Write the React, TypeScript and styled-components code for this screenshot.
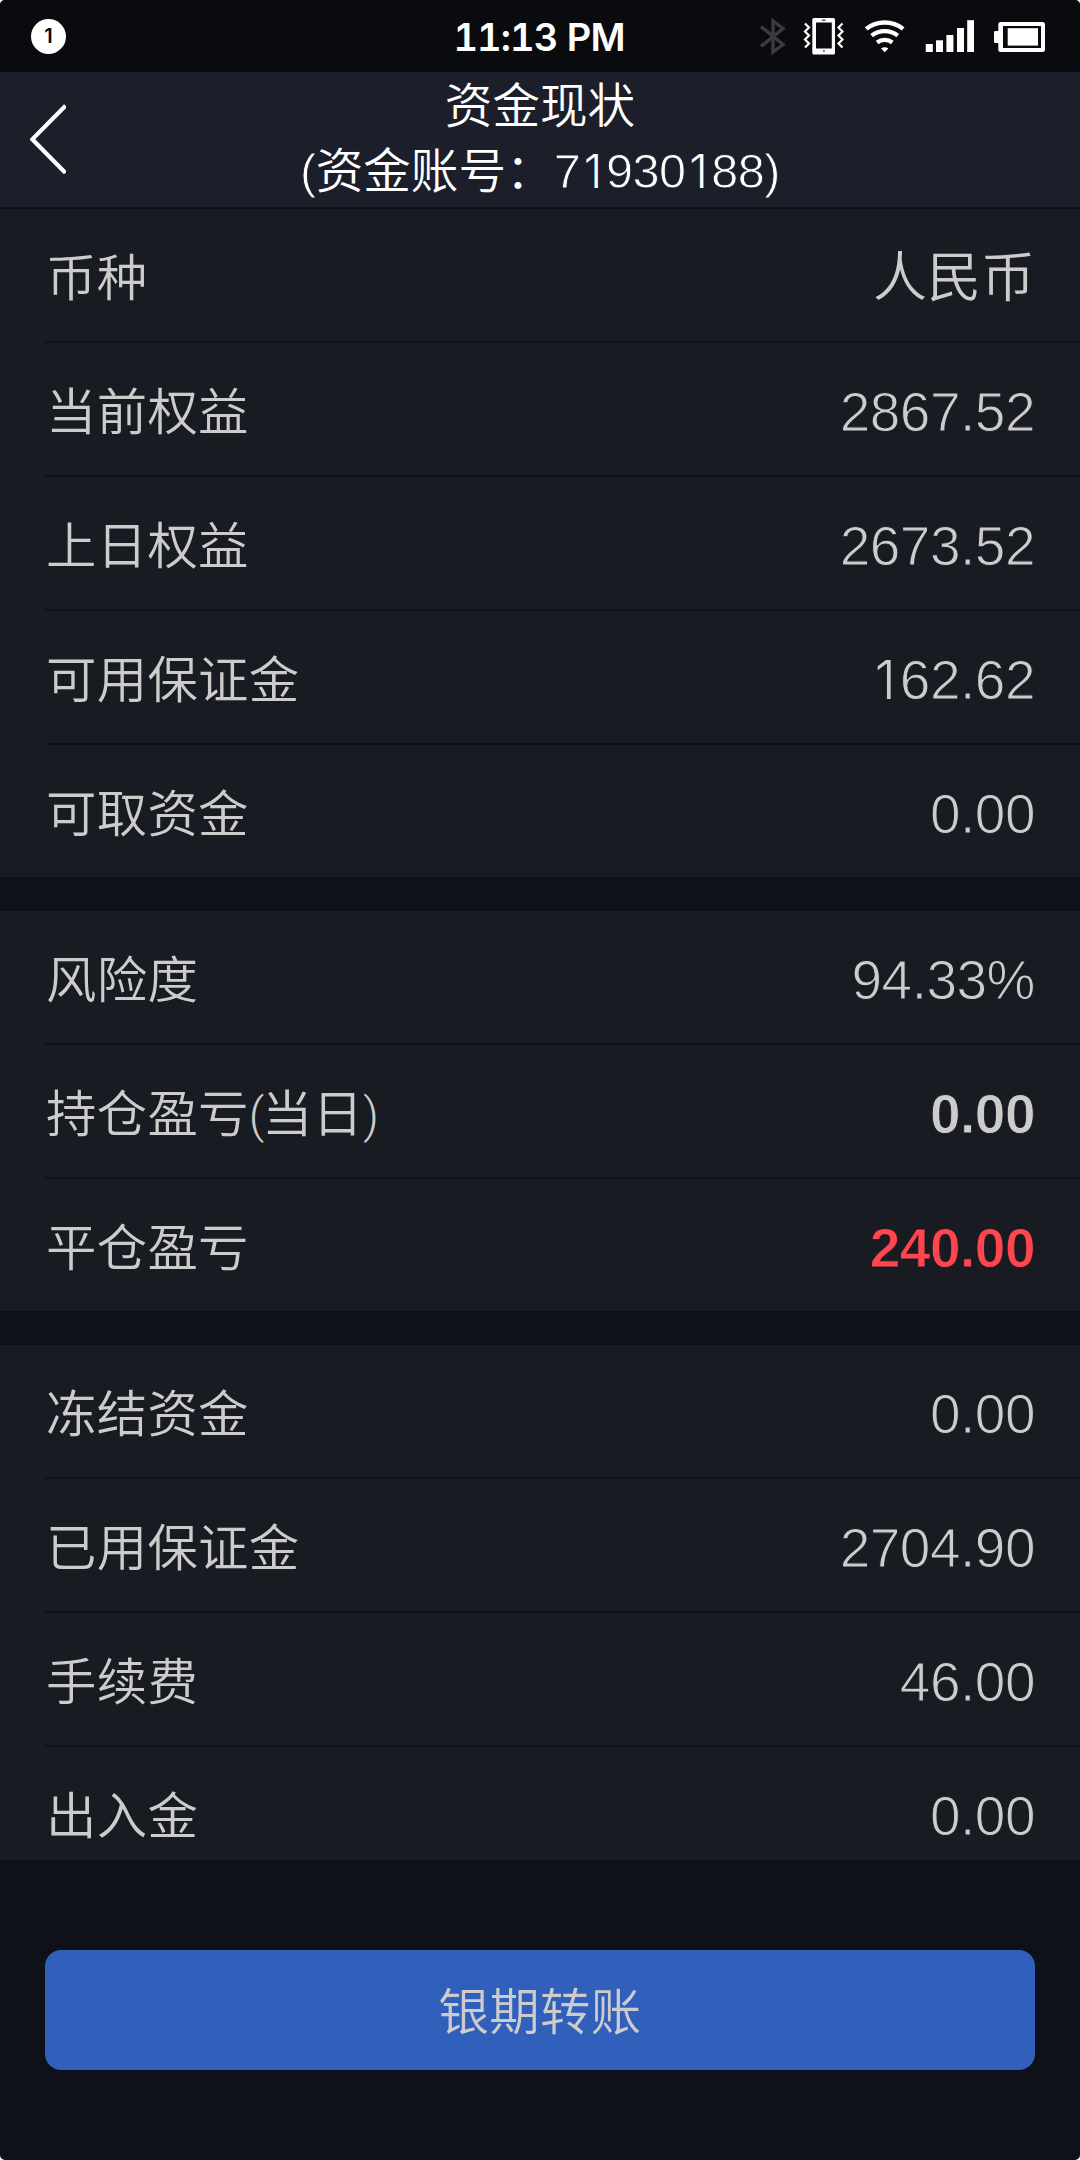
import React from 'react';
import styled, { createGlobalStyle } from 'styled-components';

const color = {
  page: '#0e1118',
  status: '#0a0b0e',
  header: '#1c1f29',
  row: '#191b23',
  text: '#cccccc',
  rise: '#ff454d',
  button: '#3060bc',
};

const cjk = '"Noto Sans CJK SC", sans-serif';

const Global = createGlobalStyle`
  * { box-sizing: border-box; }
  body { margin: 0; background: #fff; }
`;

const Screen = styled.div`
  width: 1080px;
  height: 2160px;
  display: flex;
  flex-direction: column;
  overflow: hidden;
  border-radius: 5px;
  background: ${color.page};
  color: ${color.text};
  font-family: ${cjk};
  font-weight: 350;
`;

const StatusBar = styled.div`
  flex: none;
  height: 72px;
  padding: 0 34px 0 31px;
  display: grid;
  grid-template-columns: 1fr auto 1fr;
  align-items: center;
  background: ${color.status};
  color: #fff;
`;

const Badge = styled.span`
  width: 35px;
  height: 35px;
  margin-bottom: 1px;
  border-radius: 50%;
  display: flex;
  align-items: center;
  justify-content: center;
  background: #fff;
  color: ${color.status};
  font: 600 20px/35px Inter, sans-serif;
`;

const Time = styled.span`
  font: 600 38px/72px Inter, sans-serif;
  font-feature-settings: 'tnum';
  letter-spacing: -0.9px;
  padding-top: 1px;
  margin-left: 1px;
`;

const Icons = styled.div`
  display: flex;
  justify-content: flex-end;
`;

const Icon = styled.svg<{ $gap?: number }>`
  display: block;
  flex: none;
  margin-left: ${p => p.$gap ?? 0}px;
`;

const Header = styled.header`
  flex: none;
  height: 137px;
  padding: 0 30px;
  display: grid;
  grid-template-columns: 36px 1fr 36px;
  background: ${color.header};
  border-bottom: 2px solid ${color.page};
  color: #fff;
`;

const Back = styled.button`
  padding: 0 0 1px;
  border: 0;
  background: none;
  display: flex;
  align-items: center;
`;

const Title = styled.h1`
  margin: -2px 0 0;
  font-size: 47.6px;
  font-weight: 350;
  line-height: 65px;
  text-align: center;
  white-space: nowrap;
`;

const Line = styled.div``;

const List = styled.main`
  flex: none;
  height: 1651px;
  overflow: hidden;
  display: flex;
  flex-direction: column;
  gap: 34px;
`;

const Group = styled.section`
  flex: none;
  padding-left: 45px;
  background: ${color.row};
`;

const Row = styled.div`
  height: 134px;
  padding-right: 45px;
  display: flex;
  justify-content: space-between;
  align-items: center;
  border-bottom: 2px solid ${color.page};

  &:last-child {
    height: 132px;
    border-bottom: 0;
  }
`;

const Label = styled.span`
  padding-left: 1px;
  padding-bottom: 1px;
  font-size: 50.4px;
  letter-spacing: 0.3px;
  line-height: 72px;
  white-space: nowrap;
`;

const Paren = styled.span`
  font-family: Roboto, sans-serif;
  font-weight: 300;
  font-size: 48px;
  line-height: 1;
  letter-spacing: -2.2px;
`;

const Currency = styled.span`
  padding-bottom: 2px;
  font-size: 54px;
  line-height: 72px;
`;

/* A stroke in the background colour thins the regular weight down to a light one. */
const Light = styled.span<{ $size: number; $bg: string }>`
  font-family: 'Liberation Sans', sans-serif;
  font-weight: 400;
  font-size: ${p => p.$size}px;
  line-height: 65px;
  letter-spacing: -0.5px;
  -webkit-text-stroke: ${p => (p.$size > 50 ? 1.1 : 0.9)}px ${p => p.$bg};
`;

const One = styled.span`
  display: inline-block;
  width: 0.547em;
  text-align: center;
  letter-spacing: 0;
  font-family: Inter, sans-serif;
  font-weight: 300;
  font-size: 0.97em;
  -webkit-text-stroke: 0;
`;

const Strong = styled.span<{ $rise?: boolean }>`
  font: 700 55px/66px 'Liberation Sans', sans-serif;
  letter-spacing: -0.5px;
  -webkit-text-stroke: 0.9px ${color.row};
  color: ${p => (p.$rise ? color.rise : color.text)};
`;

const Shift = styled.div`
  padding-top: 6px;
  display: flex;
`;

const Footer = styled.footer`
  flex: 1;
  padding: 90px 45px;
`;

const Transfer = styled.button`
  width: 100%;
  height: 120px;
  padding: 0 0 3px;
  border: 0;
  border-radius: 16px;
  background: ${color.button};
  color: ${color.text};
  font: 350 50.4px/72px ${cjk};
  letter-spacing: 0.3px;
`;

function Digits({ text, size, bg }: { text: string; size: number; bg: string }) {
  return (
    <Light $size={size} $bg={bg}>
      {text.split(/(1)/).filter(Boolean).map((s, i) => (s === '1' ? <One key={i}>1</One> : s))}
    </Light>
  );
}

type Kind = 'light' | 'text' | 'flat' | 'rise';
const groups: [string, string, Kind][][] = [
  [
    ['币种', '人民币', 'text'],
    ['当前权益', '2867.52', 'light'],
    ['上日权益', '2673.52', 'light'],
    ['可用保证金', '162.62', 'light'],
    ['可取资金', '0.00', 'light'],
  ],
  [
    ['风险度', '94.33%', 'light'],
    ['持仓盈亏(当日)', '0.00', 'flat'],
    ['平仓盈亏', '240.00', 'rise'],
  ],
  [
    ['冻结资金', '0.00', 'light'],
    ['已用保证金', '2704.90', 'light'],
    ['手续费', '46.00', 'light'],
    ['出入金', '0.00', 'light'],
  ],
];

function Name({ text }: { text: string }) {
  return (
    <Label>
      {text.split(/([()])/).filter(Boolean).map((s, i) => (/[()]/.test(s) ? <Paren key={i}>{s}</Paren> : s))}
    </Label>
  );
}

function Value({ text, kind }: { text: string; kind: Kind }) {
  if (kind === 'text') return <Currency>{text}</Currency>;
  return (
    <Shift>
      {kind === 'light' ? (
        <Digits text={text} size={55} bg={color.row} />
      ) : (
        <Strong $rise={kind === 'rise'}>{text}</Strong>
      )}
    </Shift>
  );
}

function StatusIcons() {
  return (
    <Icons>
      <Icon width="26" height="72" viewBox="760 0 26 72" fill="none" stroke="#3a3b3e" strokeWidth="3.4">
        <path d="M761 25.5 L783 43.5 L773 51 V20 L783 27.5 L761 45.5" />
      </Icon>
      <Icon $gap={17} width="41" height="72" viewBox="803 0 41 72" fill="none" stroke="#fff">
        <rect x="812.3" y="17" width="22.7" height="36.5" rx="1.5" fill="#fff" stroke="none" />
        <rect x="816" y="21.5" width="15.8" height="26" fill={color.status} stroke="none" />
        <path d="M822 19.2 h3.6 M823 50 h1.8" stroke="#555" strokeWidth="1.4" />
        <path d="M805 22.5 l4 4 l-4 4 l4 4 l-4 4 l4 4 l-4 4" strokeWidth="2.2" />
        <path d="M842.5 22.5 l-4 4 l4 4 l-4 4 l4 4 l-4 4 l4 4" strokeWidth="2.2" />
      </Icon>
      <Icon $gap={20} width="42" height="72" viewBox="864 0 42 72" fill="none" stroke="#fff" strokeWidth="4.3">
        <path d="M866.2 27.9 A30 30 0 0 1 903.2 27.9" />
        <path d="M871.6 34.6 A21.3 21.3 0 0 1 897.8 34.6" />
        <path d="M877.1 41.5 A12.4 12.4 0 0 1 892.3 41.5" />
        <path d="M884.7 51.3 L881 47.6 A5.4 5.4 0 0 1 888.4 47.6 Z" fill="#fff" stroke="none" />
      </Icon>
      <Icon $gap={19} width="50" height="72" viewBox="925 0 50 72" fill="#fff">
        <rect x="925.8" y="43" width="7" height="8" />
        <rect x="936" y="39.3" width="7" height="11.7" />
        <rect x="946.4" y="34" width="7" height="17" />
        <rect x="957" y="27" width="7" height="24" />
        <rect x="967.2" y="19.2" width="6.8" height="31.8" />
      </Icon>
      <Icon $gap={18} width="53" height="72" viewBox="993 0 53 72" fill="#fff">
        <rect x="994" y="30" width="6" height="12" rx="1.2" />
        <rect x="998.3" y="21" width="46.7" height="30" rx="2.5" />
        <rect x="1003" y="25" width="38" height="22" fill={color.status} />
        <rect x="1007.7" y="27.2" width="30.3" height="17.4" />
      </Icon>
    </Icons>
  );
}

export default function App() {
  return (
    <>
      <Global />
      <Screen>
        <StatusBar>
          <Badge>1</Badge>
          <Time>11:13 PM</Time>
          <StatusIcons />
        </StatusBar>
        <Header>
          <Back aria-label="返回">
            <Icon width="36" height="70" viewBox="30 104 36 70" fill="none" stroke="#fff" strokeWidth="4.2">
              <path d="M65.5 105.8 L32.3 139.3 L65.5 173" />
            </Icon>
          </Back>
          <Title>
            <Line>资金现状</Line>
            <Line>
              <Digits text="(" size={48.6} bg={color.header} />
              资金账号：
              <Digits text="71930188)" size={48.6} bg={color.header} />
            </Line>
          </Title>
        </Header>
        <List>
          {groups.map((rows, i) => (
            <Group key={i}>
              {rows.map(([label, text, kind]) => (
                <Row key={label}>
                  <Name text={label} />
                  <Value text={text} kind={kind} />
                </Row>
              ))}
            </Group>
          ))}
        </List>
        <Footer>
          <Transfer>银期转账</Transfer>
        </Footer>
      </Screen>
    </>
  );
}
